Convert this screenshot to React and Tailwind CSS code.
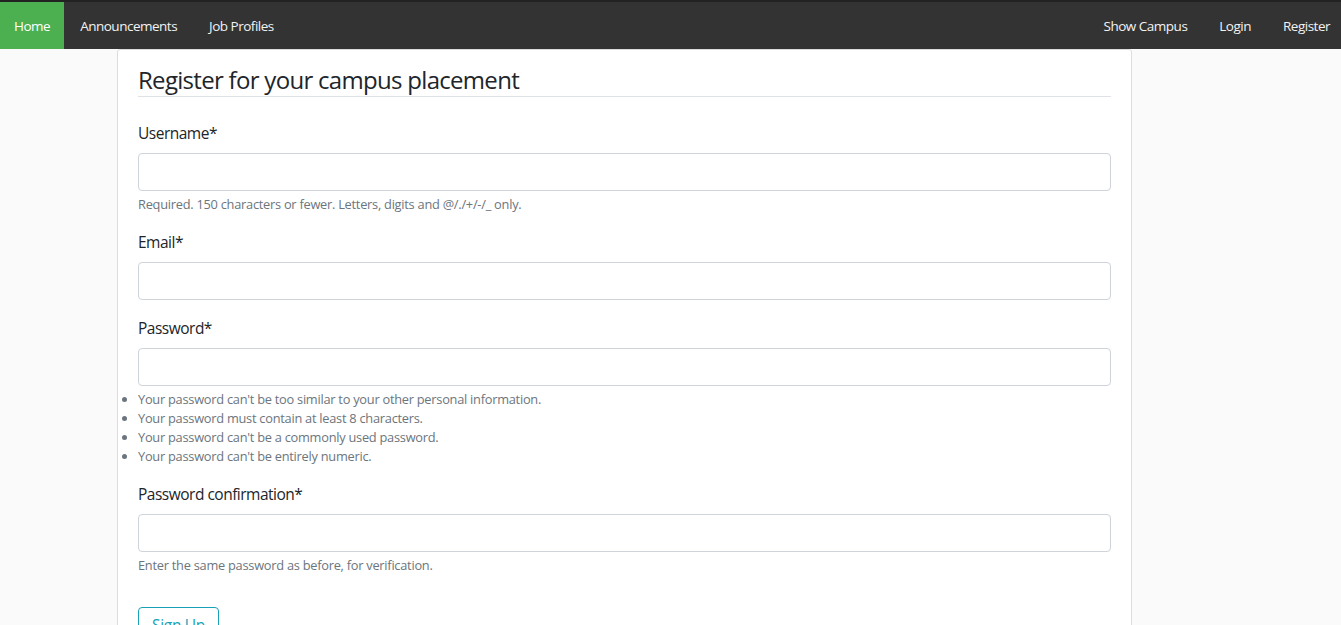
import React from "react";

const font = { fontFamily: '"Open Sans", "Noto Sans", Arial, sans-serif' };

const Field = ({ label, type = "text", help, list }) => (
    <div className="mb-4">
        <label className="block mb-2 text-[15.5px] leading-6 text-[#212529] tracking-[-0.5px]">{label}</label>
        <input
            type={type}
            className="block w-full h-[38px] px-3 bg-white border border-[#ced4da] rounded-[4px] outline-none"
        />
        {help && (
            <small className="block mt-1 text-[12.8px] leading-[19px] text-[#6c757d] tracking-[-0.25px]">{help}</small>
        )}
        {list && (
            <ul className="mt-1 list-disc list-outside pl-0 text-[12.8px] leading-[19px] text-[#6c757d] tracking-[-0.25px]">
                {list.map((item) => (
                    <li key={item}>{item}</li>
                ))}
            </ul>
        )}
    </div>
);

export default function App() {
    return (
        <div className="min-h-screen bg-[#fafafa]" style={font}>
            {/* Navbar */}
            <nav className="flex justify-between border-t-2 border-[#222222] bg-[#333333] h-[49px] text-[13.5px] text-[#f2f2f2] tracking-[-0.5px]">
                <div className="flex">
                    <a className="flex items-center pt-[2px] px-[14px] bg-[#4caf50] text-white">Home</a>
                    <a className="flex items-center pt-[2px] px-4">Announcements</a>
                    <a className="flex items-center pt-[2px] px-4">Job Profiles</a>
                </div>
                <div className="flex">
                    <a className="flex items-center pt-[2px] px-4">Show Campus</a>
                    <a className="flex items-center pt-[2px] px-4">Login</a>
                    <a className="flex items-center pt-[2px] pl-4 pr-[11px]">Register</a>
                </div>
            </nav>

            {/* Card */}
            <div className="ml-[117px] w-[1015px] bg-white border border-[#dddddd] rounded-t-[3px] px-5 pt-[10px] pb-4">
                <h1 className="pt-[3px] text-[24px] leading-[33px] text-[#212529] border-b border-[#dee2e6] mb-6 tracking-[-0.7px]">
                    Register for your campus placement
                </h1>
                <Field
                    label="Username*"
                    help="Required. 150 characters or fewer. Letters, digits and @/./+/-/_ only."
                />
                <Field label="Email*" type="email" />
                <Field
                    label="Password*"
                    type="password"
                    list={[
                        "Your password can't be too similar to your other personal information.",
                        "Your password must contain at least 8 characters.",
                        "Your password can't be a commonly used password.",
                        "Your password can't be entirely numeric.",
                    ]}
                />
                <Field
                    label="Password confirmation*"
                    type="password"
                    help="Enter the same password as before, for verification."
                />
                <div className="pt-[16px]">
                    <button className="h-[38px] px-[13px] text-[15.5px] text-[#17a2b8] border border-[#17a2b8] rounded-[4px] bg-transparent tracking-[-0.3px]">
                        Sign Up
                    </button>
                </div>
            </div>
        </div>
    );
}
